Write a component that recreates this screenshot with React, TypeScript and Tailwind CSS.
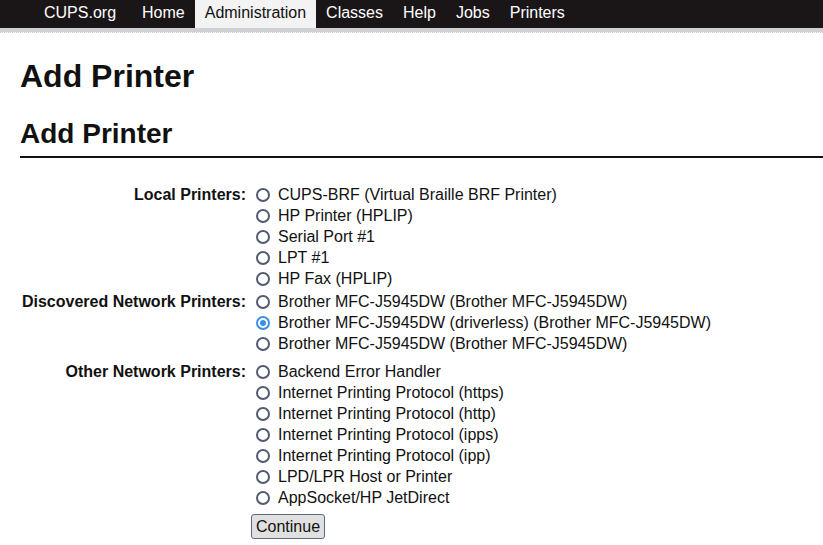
import React from "react";

const navItems = ["Home", "Administration", "Classes", "Help", "Jobs", "Printers"];

const groups: { label: string; items: string[]; gap: string }[] = [
  {
    label: "Local Printers:",
    gap: "mt-0",
    items: [
      "CUPS-BRF (Virtual Braille BRF Printer)",
      "HP Printer (HPLIP)",
      "Serial Port #1",
      "LPT #1",
      "HP Fax (HPLIP)",
    ],
  },
  {
    label: "Discovered Network Printers:",
    gap: "mt-[2px]",
    items: [
      "Brother MFC-J5945DW (Brother MFC-J5945DW)",
      "Brother MFC-J5945DW (driverless) (Brother MFC-J5945DW)",
      "Brother MFC-J5945DW (Brother MFC-J5945DW)",
    ],
  },
  {
    label: "Other Network Printers:",
    gap: "mt-[7px]",
    items: [
      "Backend Error Handler",
      "Internet Printing Protocol (https)",
      "Internet Printing Protocol (http)",
      "Internet Printing Protocol (ipps)",
      "Internet Printing Protocol (ipp)",
      "LPD/LPR Host or Printer",
      "AppSocket/HP JetDirect",
    ],
  },
];

function Radio({ checked }: { checked?: boolean }) {
  if (checked) {
    return (
      <span className="ml-[5px] mr-[8px] flex h-[14px] w-[14px] items-center justify-center rounded-full border-2 border-[#3a8ee6] bg-white">
        <span className="h-[6px] w-[6px] rounded-full bg-[#3a8ee6]" />
      </span>
    );
  }
  return <span className="ml-[5px] mr-[8px] h-[14px] w-[14px] rounded-full border-2 border-[#525c70] bg-white" />;
}

export default function App() {
  return (
    <div className="min-h-[545px] bg-white text-[#111] font-['Liberation_Sans',Arial,sans-serif] text-[16px]">
      <div className="flex h-[28px] items-stretch bg-[#1a1618] pl-[34px] text-white">
        <span className="mr-[6px] flex items-center px-[10px] pb-[2px]">CUPS.org</span>
        {navItems.map((item) => (
          <span
            key={item}
            className={
              item === "Administration"
                ? "flex items-center bg-[#f3f3f3] px-[10px] pb-[2px] text-[#111]"
                : "flex items-center px-[10px] pb-[2px]"
            }
          >
            {item}
          </span>
        ))}
      </div>
      <div className="h-[4px] bg-[#cfd0d1]" />
      <div className="border-b border-dotted border-[#c8c8c8]" />

      <div className="pl-[20px]">
        <h1 className="mt-[25px] text-[32px] font-bold leading-[36px]">Add Printer</h1>
        <h2 className="mt-[24px] border-b-2 border-[#161214] pb-[6px] text-[28px] font-bold leading-[32px]">
          Add Printer
        </h2>

        <div className="mt-[26px]">
          {groups.map((g, gi) => (
            <div key={g.label} className={`grid grid-cols-[231px_1fr] ${g.gap}`}>
              <div className="flex h-[21px] items-center justify-end pr-[5px] font-bold">{g.label}</div>
              <div className="flex flex-col">
                {g.items.map((it, i) => (
                  <label key={g.label + i} className="flex h-[21px] items-center">
                    <Radio checked={gi === 1 && i === 1} />
                    <span>{it}</span>
                  </label>
                ))}
              </div>
            </div>
          ))}
          <div className="grid grid-cols-[231px_1fr]">
            <div />
            <div className="pt-[6px]">
              <button className="h-[25px] rounded-[3px] border border-[#5f6b80] bg-[#e0e0e0] px-[4px] leading-[21px] text-[#111]">
                Continue
              </button>
            </div>
          </div>
        </div>
      </div>
    </div>
  );
}
